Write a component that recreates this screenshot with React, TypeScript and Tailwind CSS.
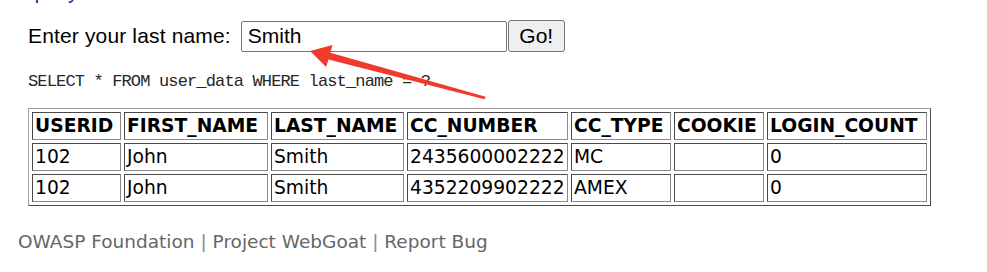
import React from "react";

const headers = [
  { h: "USERID", w: "w-[89px]" },
  { h: "FIRST_NAME", w: "w-[144px]" },
  { h: "LAST_NAME", w: "w-[133px]" },
  { h: "CC_NUMBER", w: "w-[161px]" },
  { h: "CC_TYPE", w: "w-[100px]" },
  { h: "COOKIE", w: "w-[90px]" },
  { h: "LOGIN_COUNT", w: "w-[160px]" },
];

const rows = [
  ["102", "John", "Smith", "2435600002222", "MC", "", "0"],
  ["102", "John", "Smith", "4352209902222", "AMEX", "", "0"],
];

const cellBase =
  "h-[28px] px-[2px] py-0 text-left align-middle border border-t-[#4a4a4a] border-l-[#4a4a4a] border-b-[#8a8a8a] border-r-[#8a8a8a] whitespace-nowrap leading-[22px]";

export default function App() {
  return (
    <div className="relative w-[987px] h-[272px] overflow-hidden bg-white">
      <div className="pl-[28px]">
        <div
          className="-mt-[20px] h-[24px] text-[20px] leading-[24px] text-[#1c1c8a]"
          style={{ fontFamily: '"Liberation Sans", Arial, sans-serif' }}
        >
          query
        </div>

        <div
          className="mt-[16px] flex items-center h-[32px] text-[21px] text-black"
          style={{ fontFamily: '"Liberation Sans", Arial, sans-serif' }}
        >
          <span className="leading-[24px] tracking-[0.15px]">Enter your last name:</span>
          <div className="ml-[10px] w-[266px] h-[31px] border border-[#767676] rounded-[2px] flex items-center pl-[6px] bg-white">
            <span className="leading-[24px]">Smith</span>
          </div>
          <button className="ml-[1px] w-[57px] h-[32px] border border-[#767676] rounded-[3px] bg-[#efefef] flex items-center justify-center text-[21px] leading-[24px] text-black">
            Go!
          </button>
        </div>

        <div
          className="mt-[20px] text-[17px] leading-[20px] tracking-[-0.85px] text-[#262626]"
          style={{ fontFamily: '"Liberation Mono", "Courier New", monospace' }}
        >
          SELECT * FROM user_data WHERE last_name = ?
        </div>

        <table
          className="mt-[16px] border-separate border-spacing-[3px] border border-t-[#a0a0a0] border-l-[#a0a0a0] border-b-[#4a4a4a] border-r-[#4a4a4a] text-[18.7px] text-black"
          style={{ fontFamily: '"DejaVu Sans", Verdana, sans-serif' }}
        >
          <thead>
            <tr>
              {headers.map((c) => (
                <th key={c.h} className={`${cellBase} ${c.w} font-bold`}>
                  {c.h}
                </th>
              ))}
            </tr>
          </thead>
          <tbody>
            {rows.map((r, i) => (
              <tr key={i}>
                {r.map((v, j) => (
                  <td key={j} className={`${cellBase} font-normal`}>
                    {v}
                  </td>
                ))}
              </tr>
            ))}
          </tbody>
        </table>
      </div>

      <div
        className="pl-[18px] mt-[24px] text-[18.5px] leading-[24px] text-[#666666]"
        style={{ fontFamily: '"DejaVu Sans", Verdana, sans-serif' }}
      >
        OWASP Foundation <span className="text-[#8a8a8a]">|</span> Project WebGoat{" "}
        <span className="text-[#8a8a8a]">|</span> Report Bug
      </div>

      <svg
        className="absolute left-0 top-0 pointer-events-none"
        width="987"
        height="272"
        viewBox="0 0 987 272"
      >
        <polygon
          points="310,51 332.5,45 330.4,52.8 485.6,96.8 484.6,99.2 328.4,59.6 326.2,67"
          fill="#f03a2e"
        />
      </svg>
    </div>
  );
}
